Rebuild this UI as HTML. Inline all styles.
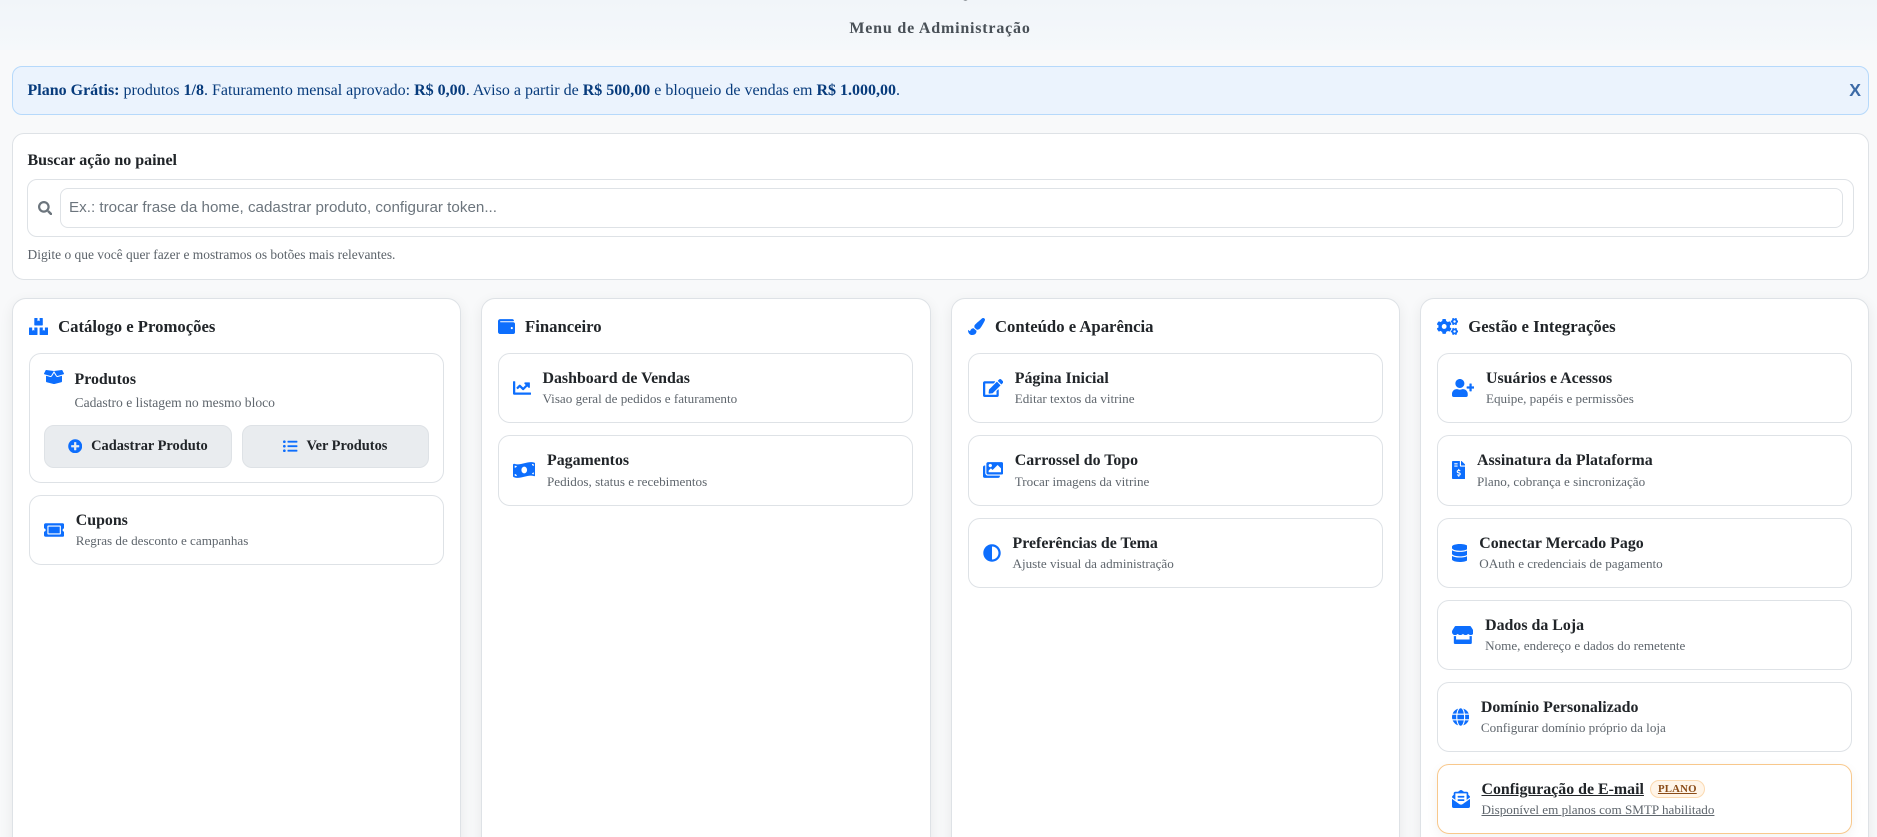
<!DOCTYPE html>
<html lang="pt-BR">
<head>
<meta charset="utf-8">
<title>Menu de Administração</title>
<style>
*{box-sizing:border-box}
html,body{margin:0;padding:0;width:1877px;height:837px;overflow:hidden}
body{background:#f8f9fa;font-family:"Liberation Serif",serif;color:#212529;position:relative}
svg{display:block;fill:#0d6efd;flex:none}
.top{position:absolute;left:0;top:0;width:1877px;height:50px;background:linear-gradient(180deg,#f1f5f9,#f5f8fb)}
.clip{position:absolute;left:960px;top:-26px;font-size:26px;font-weight:bold;line-height:26px;color:#343a40}
.h{position:absolute;left:1.5px;width:1877px;top:19px;text-align:center;font-size:16px;line-height:20px;font-weight:bold;letter-spacing:.8px;color:#495057}
.alert{position:absolute;left:12px;top:66px;width:1857px;height:49px;background:#ebf3fd;border:1px solid #b6d9fb;border-radius:10px;color:#073b7c;font-size:16px;line-height:47px;padding-left:14.5px}
.x{position:absolute;right:7px;top:0;font-family:"Liberation Sans",sans-serif;font-weight:bold;font-size:17.6px;line-height:47px;color:#3c6aa6}
.search{position:absolute;left:12px;top:133px;width:1857px;height:146.5px;background:#fff;border:1px solid #dee2e6;border-radius:12px}
.search b{position:absolute;left:14.5px;top:17px;font-size:16px;line-height:20px}
.ig{position:absolute;left:14px;top:45px;width:1826.5px;height:58px;border:1px solid #dee2e6;border-radius:10px;background:#fff}
.ig svg{position:absolute;left:10px;top:21px;width:14.4px;height:14.4px;fill:#6c757d}
.inp{position:absolute;left:32px;top:8px;width:1783px;height:40px;border:1px solid #dee2e6;border-radius:8px;font-family:"Liberation Sans",sans-serif;font-size:15.2px;line-height:38px;color:#6c757d;padding-left:8px}
.hint{position:absolute;left:14.5px;top:113px;font-size:13.44px;line-height:16px;color:#5c636a}
.col{position:absolute;top:298px;height:640px;background:#fff;border:1px solid #dee2e6;border-radius:14px;box-shadow:0 4px 14px rgba(0,0,0,.07);padding-top:17.5px;padding-right:0}
.c1{left:12px;width:448.5px;padding-left:16px}
.c2{left:481px;width:449.5px;padding-left:16px}
.c3{left:951px;width:448.5px;padding-left:16px}
.c4{left:1420px;width:449px;padding-left:16px}
.t{display:flex;align-items:center;gap:10px;height:20px;font-size:16.7px;font-weight:bold;line-height:20px;margin-bottom:16.7px}
.list{display:flex;flex-direction:column;gap:12px;width:415px}
.it{display:flex;align-items:center;gap:12px;height:70.2px;padding:0 13.5px;border:1px solid #dee2e6;border-radius:12px;background:#fff}
.it b{display:block;font-size:15.9px;line-height:20px}
.it span{display:block;font-size:13.12px;line-height:16px;color:#5f666d;margin-top:2.2px}
.prod{height:129.8px;display:block;padding:0;position:relative}
.prod>svg{position:absolute;left:14px;top:15px}
.prod>b{position:absolute;left:44.5px;top:16px;margin:0}
.prod>span{position:absolute;left:44.5px;top:41px;margin:0;font-size:13.6px}
.btn{position:absolute;top:71px;height:43px;border:1px solid #dee2e6;background:#e9ecef;border-radius:10px;display:flex;align-items:center;justify-content:center;gap:9px;font-size:14.4px;font-weight:bold;color:#212529}
.btn svg{margin-top:-1.5px}
.cfg{border-color:#f8c88c;box-shadow:0 4px 12px rgba(0,0,0,.05)}
.cfg b,.cfg span{text-decoration:underline}
.bd{display:inline-block;vertical-align:top;margin:0 0 0 6px;height:18px;line-height:16px;padding:0 7px;border:1px solid #fbd9b0;border-radius:9px;background:#fff5e9;color:#8a4b17;font-size:10.8px;font-weight:bold;font-style:normal;letter-spacing:.2px;text-decoration:underline}
</style>
</head>
<body>
<div class="top"></div>
<div class="clip">ç</div>
<div class="h">Menu de Administração</div>

<div class="alert"><strong>Plano Grátis:</strong> produtos <strong>1/8</strong>. Faturamento mensal aprovado: <strong>R$ 0,00</strong>. Aviso a partir de <strong>R$ 500,00</strong> e bloqueio de vendas em <strong>R$ 1.000,00</strong>.<div class="x">X</div></div>

<div class="search">
  <b>Buscar ação no painel</b>
  <div class="ig">
    <svg viewBox="0 0 512 512"><path d="M505 442.7L405.3 343c-4.5-4.5-10.6-7-17-7H372c27.6-35.3 44-79.7 44-128C416 93.1 322.9 0 208 0S0 93.1 0 208s93.1 208 208 208c48.3 0 92.7-16.4 128-44v16.3c0 6.4 2.5 12.5 7 17l99.7 99.7c9.4 9.4 24.6 9.4 33.9 0l28.3-28.3c9.4-9.4 9.4-24.6.1-34zM208 336c-70.7 0-128-57.2-128-128 0-70.7 57.2-128 128-128 70.7 0 128 57.2 128 128 0 70.7-57.2 128-128 128z"/></svg>
    <div class="inp">Ex.: trocar frase da home, cadastrar produto, configurar token...</div>
  </div>
  <div class="hint">Digite o que você quer fazer e mostramos os botões mais relevantes.</div>
</div>

<div class="col c1">
  <div class="t"><svg width="19.1" height="17" viewBox="0 0 576 512"><path d="M560 288h-80v96l-32-21.3-32 21.3v-96h-80c-8.8 0-16 7.2-16 16v192c0 8.8 7.2 16 16 16h224c8.8 0 16-7.2 16-16V304c0-8.8-7.2-16-16-16zm-384-64h224c8.8 0 16-7.2 16-16V16c0-8.8-7.2-16-16-16h-80v96l-32-21.3L256 96V0h-80c-8.8 0-16 7.2-16 16v192c0 8.8 7.2 16 16 16zm64 64h-80v96l-32-21.3L96 384v-96H16c-8.8 0-16 7.2-16 16v192c0 8.8 7.2 16 16 16h224c8.8 0 16-7.2 16-16V304c0-8.8-7.2-16-16-16z"/></svg>Catálogo e Promoções</div>
  <div class="list">
    <div class="it prod">
      <svg width="20" height="16" viewBox="0 0 640 512"><path d="M425.7 256c-16.9 0-32.8-9-41.4-23.4L320 126l-64.2 106.6c-8.7 14.5-24.6 23.5-41.5 23.5-4.5 0-9-.6-13.3-1.9L64 215v178c0 14.7 10 27.5 24.2 31l216.2 54.1c10.2 2.5 20.9 2.5 31 0L551.8 424c14.2-3.6 24.2-16.4 24.2-31V215l-137 39.1c-4.3 1.3-8.8 1.9-13.3 1.9zm212.6-112.2L586.8 41c-3.1-6.2-9.8-9.8-16.7-8.9L320 64l91.7 152.1c3.8 6.3 11.4 9.3 18.5 7.3l197.9-56.5c9.9-2.9 14.7-13.9 10.2-23.1zM53.2 41L1.7 143.8c-4.6 9.2.3 20.2 10.1 23l197.9 56.5c7.1 2 14.7-1 18.5-7.3L320 64 69.8 32.1c-6.9-.8-13.5 2.7-16.6 8.9z"/></svg>
      <b>Produtos</b>
      <span>Cadastro e listagem no mesmo bloco</span>
      <div class="btn" style="left:14px;width:187.5px"><svg width="14.4" height="14.4" viewBox="0 0 512 512"><path d="M256 8C119 8 8 119 8 256s111 248 248 248 248-111 248-248S393 8 256 8zm144 276c0 6.6-5.4 12-12 12h-92v92c0 6.6-5.4 12-12 12h-56c-6.6 0-12-5.4-12-12v-92h-92c-6.6 0-12-5.4-12-12v-56c0-6.6 5.4-12 12-12h92v-92c0-6.6 5.4-12 12-12h56c6.6 0 12 5.4 12 12v92h92c6.6 0 12 5.4 12 12v56z"/></svg>Cadastrar Produto</div>
      <div class="btn" style="left:212px;width:186.5px"><svg width="14.4" height="14.4" viewBox="0 0 512 512"><path d="M48 48a48 48 0 1 0 48 48 48 48 0 0 0-48-48zm0 160a48 48 0 1 0 48 48 48 48 0 0 0-48-48zm0 160a48 48 0 1 0 48 48 48 48 0 0 0-48-48zm448 16H176a16 16 0 0 0-16 16v32a16 16 0 0 0 16 16h320a16 16 0 0 0 16-16v-32a16 16 0 0 0-16-16zm0-320H176a16 16 0 0 0-16 16v32a16 16 0 0 0 16 16h320a16 16 0 0 0 16-16V80a16 16 0 0 0-16-16zm0 160H176a16 16 0 0 0-16 16v32a16 16 0 0 0 16 16h320a16 16 0 0 0 16-16v-32a16 16 0 0 0-16-16z"/></svg>Ver Produtos</div>
    </div>
    <div class="it"><svg width="20.25" height="18" viewBox="0 0 576 512"><path d="M128 160h320v192H128V160zm400 96c0 26.51 21.49 48 48 48v96c0 26.51-21.49 48-48 48H48c-26.51 0-48-21.49-48-48v-96c26.51 0 48-21.49 48-48s-21.49-48-48-48v-96c0-26.51 21.49-48 48-48h480c26.51 0 48 21.49 48 48v96c-26.51 0-48 21.49-48 48zm-48-104c0-13.255-10.745-24-24-24H120c-13.255 0-24 10.745-24 24v208c0 13.255 10.745 24 24 24h336c13.255 0 24-10.745 24-24V152z"/></svg><div><b>Cupons</b><span>Regras de desconto e campanhas</span></div></div>
  </div>
</div>

<div class="col c2">
  <div class="t"><svg width="17" height="17" viewBox="0 0 512 512"><path d="M461.2 128H80c-8.84 0-16-7.16-16-16s7.16-16 16-16h384c8.84 0 16-7.16 16-16 0-26.51-21.49-48-48-48H64C28.65 32 0 60.65 0 96v320c0 35.35 28.65 64 64 64h397.2c28.02 0 50.8-21.53 50.8-48V176c0-26.47-22.78-48-50.8-48zM416 336c-17.67 0-32-14.33-32-32s14.33-32 32-32 32 14.33 32 32-14.33 32-32 32z"/></svg>Financeiro</div>
  <div class="list">
    <div class="it"><svg width="18" height="18" viewBox="0 0 512 512"><path d="M496 384H64V80c0-8.84-7.16-16-16-16H16C7.16 64 0 71.16 0 80v336c0 17.67 14.33 32 32 32h464c8.84 0 16-7.16 16-16v-32c0-8.84-7.16-16-16-16zM464 96H345.94c-21.38 0-32.09 25.85-16.97 40.97l32.4 32.4L288 242.75l-73.37-73.37c-12.5-12.5-32.76-12.5-45.25 0l-68.69 68.69c-6.25 6.25-6.25 16.38 0 22.63l22.62 22.62c6.25 6.25 16.38 6.25 22.63 0L192 237.25l73.37 73.37c12.5 12.5 32.76 12.5 45.25 0l96-96 32.4 32.4c15.12 15.12 40.97 4.41 40.97-16.97V112c.01-8.84-7.15-16-16-16z"/></svg><div><b>Dashboard de Vendas</b><span>Visao geral de pedidos e faturamento</span></div></div>
    <div class="it"><svg width="22.5" height="18" viewBox="0 0 640 512"><path d="M621.16 54.46C582.37 38.19 543.55 32 504.75 32c-123.17-.01-246.33 62.34-369.5 62.34-30.89 0-61.76-3.92-92.65-13.72-3.47-1.1-6.95-1.62-10.35-1.62C15.04 79 0 92.32 0 110.81v317.26c0 12.63 7.23 24.6 18.84 29.46C57.63 473.81 96.45 480 135.25 480c123.17 0 246.34-62.35 369.51-62.35 30.89 0 61.76 3.92 92.65 13.72 3.47 1.1 6.95 1.62 10.35 1.62 17.21 0 32.25-13.32 32.25-31.81V83.93c-.01-12.64-7.24-24.6-18.85-29.47zM48 132.22c20.12 5.04 41.12 7.57 62.72 8.93C104.84 170.54 79 192.69 48 192.69v-60.47zm0 285v-47.78c34.37 0 62.18 27.27 63.71 61.4-22.53-1.81-43.59-6.31-63.71-13.62zM320 352c-44.19 0-80-42.99-80-96 0-53.02 35.82-96 80-96s80 42.98 80 96c0 53.03-35.83 96-80 96zm272 27.78c-17.52-4.39-35.71-6.85-54.32-8.44 5.87-26.08 27.5-45.88 54.32-49.28v57.72zm0-236.11c-30.89-3.91-54.86-29.7-55.81-61.55 19.54 2.17 38.09 6.23 55.81 12.66v48.89z"/></svg><div><b>Pagamentos</b><span>Pedidos, status e recebimentos</span></div></div>
  </div>
</div>

<div class="col c3">
  <div class="t"><svg width="17" height="17" viewBox="0 0 512 512"><path d="M167.02 309.34c-40.12 2.58-76.53 17.86-97.19 72.3-2.35 6.21-8 9.98-14.59 9.98-11.11 0-45.46-27.67-55.25-34.35C0 439.62 37.93 512 128 512c75.86 0 128-43.77 128-120.19 0-3.11-.65-6.08-.97-9.13l-88.01-73.34zM457.89 0c-15.16 0-29.37 6.71-40.21 16.45C213.27 199.05 192 203.34 192 257.09c0 13.7 3.25 26.76 8.73 38.7l63.82 53.18c7.21 1.8 14.64 3.03 22.39 3.03 62.11 0 98.11-45.47 211.16-256.46 7.38-14.35 13.9-29.85 13.9-45.99C512 20.64 486 0 457.89 0z"/></svg>Conteúdo e Aparência</div>
  <div class="list">
    <div class="it"><svg width="20.25" height="18" viewBox="0 0 576 512"><path d="M402.6 83.2l90.2 90.2c3.8 3.8 3.8 10 0 13.8L274.4 405.6l-92.8 10.3c-12.4 1.4-22.9-9.1-21.5-21.5l10.3-92.8L388.8 83.2c3.8-3.8 10-3.8 13.8 0zm162-22.9l-48.8-48.8c-15.2-15.2-39.9-15.2-55.2 0l-35.4 35.4c-3.8 3.8-3.8 10 0 13.8l90.2 90.2c3.8 3.8 10 3.8 13.8 0l35.4-35.4c15.2-15.3 15.2-40 0-55.2zM384 346.2V448H64V128h229.8c3.2 0 6.2-1.3 8.5-3.5l40-40c7.6-7.6 2.2-20.5-8.5-20.5H48C21.5 64 0 85.5 0 112v352c0 26.5 21.5 48 48 48h352c26.5 0 48-21.5 48-48V306.2c0-10.7-12.9-16-20.5-8.5l-40 40c-2.2 2.3-3.5 5.3-3.5 8.5z"/></svg><div><b>Página Inicial</b><span>Editar textos da vitrine</span></div></div>
    <div class="it"><svg width="20.25" height="18" viewBox="0 0 576 512"><path d="M480 416v16c0 26.51-21.49 48-48 48H48c-26.51 0-48-21.49-48-48V176c0-26.51 21.49-48 48-48h16v208c0 44.112 35.888 80 80 80h336zm96-80V80c0-26.51-21.49-48-48-48H144c-26.51 0-48 21.49-48 48v256c0 26.51 21.49 48 48 48h384c26.51 0 48-21.49 48-48zM256 128c0 26.51-21.49 48-48 48s-48-21.49-48-48 21.49-48 48-48 48 21.49 48 48zm-96 144l55.515-55.515c4.686-4.686 12.284-4.686 16.971 0L272 256l135.515-135.515c4.686-4.686 12.284-4.686 16.971 0L512 208v112H160v-48z"/></svg><div><b>Carrossel do Topo</b><span>Trocar imagens da vitrine</span></div></div>
    <div class="it"><svg width="18" height="18" viewBox="0 0 512 512"><path d="M8 256c0 136.966 111.033 248 248 248s248-111.034 248-248S392.966 8 256 8 8 119.033 8 256zm248 184V72c101.705 0 184 82.311 184 184 0 101.705-82.311 184-184 184z"/></svg><div><b>Preferências de Tema</b><span>Ajuste visual da administração</span></div></div>
  </div>
</div>

<div class="col c4">
  <div class="t"><svg width="21.25" height="17" viewBox="0 0 640 512"><path d="M512.1 191l-8.2 14.3c-3 5.3-9.4 7.5-15.1 5.4-11.8-4.4-22.6-10.7-32.1-18.6-4.6-3.8-5.8-10.5-2.8-15.7l8.2-14.3c-6.9-8-12.3-17.3-15.9-27.4h-16.5c-6 0-11.2-4.3-12.2-10.3-2-12-2.1-24.6 0-37.1 1-6 6.2-10.4 12.2-10.4h16.5c3.6-10.1 9-19.4 15.9-27.4l-8.2-14.3c-3-5.2-1.9-11.9 2.8-15.7 9.5-7.9 20.4-14.2 32.1-18.6 5.7-2.1 12.1.1 15.1 5.4l8.2 14.3c10.5-1.9 21.2-1.9 31.7 0L552 6.3c3-5.3 9.4-7.5 15.1-5.4 11.8 4.4 22.6 10.7 32.1 18.6 4.6 3.8 5.8 10.5 2.8 15.7l-8.2 14.3c6.9 8 12.3 17.3 15.9 27.4h16.5c6 0 11.2 4.3 12.2 10.3 2 12 2.1 24.6 0 37.1-1 6-6.2 10.4-12.2 10.4h-16.5c-3.6 10.1-9 19.4-15.9 27.4l8.2 14.3c3 5.2 1.9 11.9-2.8 15.7-9.5 7.9-20.4 14.2-32.1 18.6-5.7 2.1-12.1-.1-15.1-5.4l-8.2-14.3c-10.4 1.9-21.2 1.9-31.7 0zm-10.5-58.8c38.5 29.6 82.4-14.3 52.8-52.8-38.5-29.7-82.4 14.3-52.8 52.8zM386.3 286.1l33.7 16.8c10.1 5.8 14.5 18.1 10.5 29.1-8.9 24.2-26.4 46.4-42.6 65.8-7.4 8.9-20.2 11.1-30.3 5.3l-29.1-16.8c-16 13.7-34.6 24.6-54.9 31.7v33.6c0 11.6-8.3 21.6-19.7 23.6-24.6 4.2-50.4 4.4-75.9 0-11.5-2-20-11.9-20-23.6V418c-20.3-7.2-38.9-18-54.9-31.7L74 403c-10 5.8-22.9 3.6-30.3-5.3-16.2-19.4-33.3-41.6-42.2-65.7-4-10.9.4-23.2 10.5-29.1l33.3-16.8c-3.9-20.9-3.9-42.4 0-63.4L12 205.8c-10.1-5.8-14.6-18.1-10.5-29 8.9-24.2 26-46.4 42.2-65.8 7.4-8.9 20.2-11.1 30.3-5.3l29.1 16.8c16-13.7 34.6-24.6 54.9-31.7V57.1c0-11.5 8.2-21.5 19.6-23.5 24.6-4.2 50.5-4.4 76-.1 11.5 2 20 11.9 20 23.6v33.6c20.3 7.2 38.9 18 54.9 31.7l29.1-16.8c10-5.8 22.9-3.6 30.3 5.3 16.2 19.4 33.2 41.6 42.1 65.8 4 10.9.1 23.2-10 29.1l-33.7 16.8c3.9 21 3.9 42.5 0 63.5zm-117.6 21.1c59.2-77-28.7-164.9-105.7-105.7-59.2 77 28.7 164.9 105.7 105.7zm243.4 182.7l-8.2 14.3c-3 5.3-9.4 7.5-15.1 5.4-11.8-4.4-22.6-10.7-32.1-18.6-4.6-3.8-5.8-10.5-2.8-15.7l8.2-14.3c-6.9-8-12.3-17.3-15.9-27.4h-16.5c-6 0-11.2-4.3-12.2-10.3-2-12-2.1-24.6 0-37.1 1-6 6.2-10.4 12.2-10.4h16.5c3.6-10.1 9-19.4 15.9-27.4l-8.2-14.3c-3-5.2-1.9-11.9 2.8-15.7 9.5-7.9 20.4-14.2 32.1-18.6 5.7-2.1 12.1.1 15.1 5.4l8.2 14.3c10.5-1.9 21.2-1.9 31.7 0l8.2-14.3c3-5.3 9.4-7.5 15.1-5.4 11.8 4.4 22.6 10.7 32.1 18.6 4.6 3.8 5.8 10.5 2.8 15.7l-8.2 14.3c6.9 8 12.3 17.3 15.9 27.4h16.5c6 0 11.2 4.3 12.2 10.3 2 12 2.1 24.6 0 37.1-1 6-6.2 10.4-12.2 10.4h-16.5c-3.6 10.1-9 19.4-15.9 27.4l8.2 14.3c3 5.2 1.9 11.9-2.8 15.7-9.5 7.9-20.4 14.2-32.1 18.6-5.7 2.1-12.1-.1-15.1-5.4l-8.2-14.3c-10.4 1.9-21.2 1.9-31.7 0zM501.6 431c38.5 29.6 82.4-14.3 52.8-52.8-38.5-29.6-82.4 14.3-52.8 52.8z"/></svg>Gestão e Integrações</div>
  <div class="list">
    <div class="it"><svg width="22.5" height="18" viewBox="0 0 640 512"><path d="M624 208h-64v-64c0-8.8-7.2-16-16-16h-32c-8.8 0-16 7.2-16 16v64h-64c-8.8 0-16 7.2-16 16v32c0 8.8 7.2 16 16 16h64v64c0 8.8 7.2 16 16 16h32c8.8 0 16-7.2 16-16v-64h64c8.8 0 16-7.2 16-16v-32c0-8.8-7.2-16-16-16zm-400 48c70.7 0 128-57.3 128-128S294.7 0 224 0 96 57.3 96 128s57.3 128 128 128zm89.6 32h-16.7c-22.2 10.2-46.9 16-72.9 16s-50.6-5.8-72.9-16h-16.7C60.2 288 0 348.2 0 422.4V464c0 26.5 21.5 48 48 48h352c26.5 0 48-21.5 48-48v-41.6c0-74.2-60.2-134.4-134.4-134.4z"/></svg><div><b>Usuários e Acessos</b><span>Equipe, papéis e permissões</span></div></div>
    <div class="it"><svg width="13.5" height="18" viewBox="0 0 384 512"><path d="M377 105L279.1 7c-4.5-4.5-10.6-7-17-7H256v128h128v-6.1c0-6.3-2.5-12.4-7-16.9zm-153 31V0H24C10.7 0 0 10.7 0 24v464c0 13.3 10.7 24 24 24h336c13.3 0 24-10.7 24-24V160H248c-13.2 0-24-10.8-24-24zM64 72c0-4.42 3.58-8 8-8h80c4.42 0 8 3.58 8 8v16c0 4.42-3.58 8-8 8H72c-4.42 0-8-3.58-8-8V72zm0 80v-16c0-4.42 3.58-8 8-8h80c4.42 0 8 3.58 8 8v16c0 4.42-3.58 8-8 8H72c-4.42 0-8-3.58-8-8zm144 263.88V440c0 4.42-3.58 8-8 8h-16c-4.42 0-8-3.58-8-8v-24.29c-11.29-.58-22.27-4.52-31.37-11.35-3.9-2.93-4.1-8.77-.57-12.14l11.75-11.21c2.77-2.64 6.89-2.76 10.13-.73 3.87 2.42 8.26 3.72 12.82 3.72h28.11c6.5 0 11.8-5.92 11.8-13.19 0-5.95-3.61-11.19-8.77-12.73l-45-13.5c-18.59-5.58-31.58-23.42-31.58-43.39 0-24.52 19.05-44.44 42.67-45.07V232c0-4.42 3.58-8 8-8h16c4.42 0 8 3.58 8 8v24.29c11.29.58 22.27 4.51 31.37 11.35 3.9 2.93 4.1 8.77.57 12.14l-11.75 11.21c-2.77 2.64-6.89 2.76-10.13.73-3.87-2.43-8.26-3.72-12.82-3.72h-28.11c-6.5 0-11.8 5.92-11.8 13.19 0 5.95 3.61 11.19 8.77 12.73l45 13.5c18.59 5.58 31.58 23.42 31.58 43.39 0 24.53-19.05 44.44-42.67 45.07z"/></svg><div><b>Assinatura da Plataforma</b><span>Plano, cobrança e sincronização</span></div></div>
    <div class="it"><svg width="15.75" height="18" viewBox="0 0 448 512"><path d="M448 73.143v45.714C448 159.143 347.667 192 224 192S0 159.143 0 118.857V73.143C0 32.857 100.333 0 224 0s224 32.857 224 73.143zM448 176v102.857C448 319.143 347.667 352 224 352S0 319.143 0 278.857V176c48.125 33.143 136.208 48.572 224 48.572S399.874 209.143 448 176zm0 160v102.857C448 479.143 347.667 512 224 512S0 479.143 0 438.857V336c48.125 33.143 136.208 48.572 224 48.572S399.874 369.143 448 336z"/></svg><div><b>Conectar Mercado Pago</b><span>OAuth e credenciais de pagamento</span></div></div>
    <div class="it"><svg width="21.65" height="18" viewBox="0 0 616 512"><path d="M602 118.6L537.1 15C531.3 5.7 521 0 510 0H106C95 0 84.7 5.7 78.9 15L14 118.6c-33.9 54.1-3.9 129.3 59.4 137.9 4.6.6 9.1.9 13.7.9 29.9 0 56.4-13.1 74.8-33.4 18.4 20.3 45 33.4 74.8 33.4 29.9 0 56.5-13.1 74.8-33.4 18.4 20.3 45 33.4 74.8 33.4 29.9 0 56.4-13.1 74.8-33.4 18.5 20.3 45 33.4 74.8 33.4 4.7 0 9.2-.3 13.7-.9 63.5-8.5 93.6-83.7 59.6-137.9zM529.5 288c-10 0-19.9-1.5-29.5-3.8V384H116v-99.8c-9.6 2.2-19.5 3.8-29.5 3.8-6 0-12.1-.4-18-1.2-5.6-.8-11.1-2.1-16.4-3.6V480c0 17.7 14.3 32 32 32h448c17.7 0 32-14.3 32-32V283.2c-5.4 1.6-10.8 2.9-16.4 3.6-6.1.8-12.1 1.2-18.2 1.2z"/></svg><div><b>Dados da Loja</b><span>Nome, endereço e dados do remetente</span></div></div>
    <div class="it"><svg width="17.4" height="18" viewBox="0 0 496 512"><path d="M336.5 160C322 70.7 287.8 8 248 8s-74 62.7-88.5 152h177zM152 256c0 22.2 1.2 43.5 3.3 64h185.3c2.1-20.5 3.3-41.8 3.3-64s-1.2-43.5-3.3-64H155.3c-2.1 20.5-3.3 41.8-3.3 64zm324.7-96c-28.6-67.9-86.5-120.4-158-141.6 24.4 33.8 41.2 84.7 50 141.6h108zM177.2 18.4C105.8 39.6 47.8 92.1 19.3 160h108c8.7-56.9 25.5-107.8 49.9-141.6zM487.4 192H372.7c2.1 21 3.3 42.5 3.3 64s-1.2 43-3.3 64h114.6c5.5-20.5 8.6-41.8 8.6-64s-3.1-43.5-8.5-64zM120 256c0-21.5 1.2-43 3.3-64H8.6C3.2 212.5 0 233.8 0 256s3.2 43.5 8.6 64h114.6c-2-21-3.2-42.5-3.2-64zm39.5 96c14.5 89.3 48.7 152 88.5 152s74-62.7 88.5-152h-177zm159.3 141.6c71.4-21.2 129.4-73.7 158-141.6h-108c-8.8 56.9-25.6 107.8-50 141.6zM19.3 352c28.6 67.9 86.5 120.4 158 141.6-24.4-33.8-41.2-84.7-50-141.6h-108z"/></svg><div><b>Domínio Personalizado</b><span>Configurar domínio próprio da loja</span></div></div>
    <div class="it cfg"><svg width="18" height="18" viewBox="0 0 512 512"><path d="M176 216h160c8.84 0 16-7.16 16-16v-16c0-8.84-7.16-16-16-16H176c-8.84 0-16 7.16-16 16v16c0 8.84 7.16 16 16 16zm-16 80c0 8.84 7.16 16 16 16h160c8.84 0 16-7.16 16-16v-16c0-8.84-7.16-16-16-16H176c-8.84 0-16 7.16-16 16v16zm96 121.13c-16.42 0-32.84-5.06-46.86-15.19L0 250.86V464c0 26.51 21.49 48 48 48h416c26.51 0 48-21.49 48-48V250.86L302.86 401.94c-14.02 10.12-30.44 15.19-46.86 15.19zm237.61-254.18c-8.85-6.94-17.24-13.47-29.61-22.81V96c0-26.51-21.49-48-48-48h-77.55c-3.04-2.2-5.87-4.26-9.04-6.56C312.6 29.17 279.2-.35 256 0c-23.2-.35-56.59 29.17-73.41 41.44-3.17 2.3-6 4.36-9.04 6.56H96c-26.51 0-48 21.49-48 48v44.14c-12.37 9.33-20.76 15.87-29.61 22.81A47.995 47.995 0 0 0 0 200.72v10.65l96 69.35V96h320v184.72l96-69.35v-10.65c0-14.74-6.78-28.67-18.39-37.77z"/></svg><div><b>Configuração de E-mail<em class="bd">PLANO</em></b><span>Disponível em planos com SMTP habilitado</span></div></div>
  </div>
</div>
</body>
</html>
